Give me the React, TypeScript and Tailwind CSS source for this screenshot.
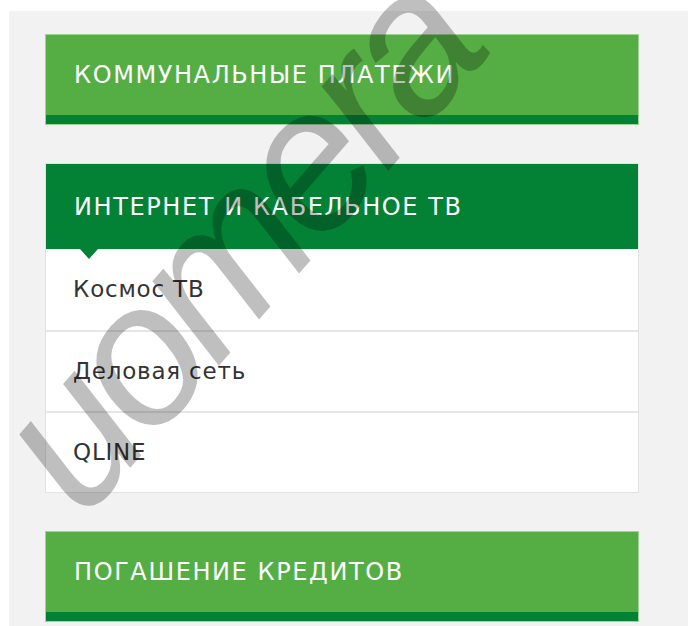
import React from "react";

const font = { fontFamily: '"DejaVu Sans", Verdana, sans-serif' };

function GreenCard({ title }: { title: string }) {
  return (
    <div className="border border-[#9fd294] bg-[#54ae44]">
      <div
        className="flex h-[80px] items-center px-[28px] text-[24px] tracking-[1.6px] text-white"
        style={font}
      >
        {title}
      </div>
      <div className="h-[9px] bg-[#038236]" />
    </div>
  );
}

const providers = ["Космос ТВ", "Деловая сеть", "QLINE"];

export default function App() {
  return (
    <div className="relative h-[626px] overflow-hidden bg-white pl-[9px] pt-[11px]">
      <div className="h-full bg-[#f2f2f2] pl-[36px] pt-[23px]">
        <div className="flex w-[594px] flex-col gap-[38px]">
          <GreenCard title="КОММУНАЛЬНЫЕ ПЛАТЕЖИ" />

          <div className="relative border border-[#e2e2e2] bg-white">
            <div
              className="relative flex h-[85px] items-center bg-[#038236] px-[28px] text-[24px] tracking-[1.6px] text-white"
              style={font}
            >
              ИНТЕРНЕТ И КАБЕЛЬНОЕ ТВ
              <span className="absolute left-[34px] top-full h-0 w-0 border-x-[9px] border-t-[10px] border-x-transparent border-t-[#038236]" />
            </div>
            {providers.map((name, i) => (
              <div
                key={name}
                className={`flex h-[81px] items-center px-[27px] text-[23px] tracking-[0.8px] text-[#333333] ${
                  i > 0 ? "border-t-2 border-[#e6e6e6]" : ""
                }`}
                style={font}
              >
                {name}
              </div>
            ))}
          </div>

          <GreenCard title="ПОГАШЕНИЕ КРЕДИТОВ" />
        </div>
      </div>

      {/* stock watermark laid across the page */}
      <span
        className="pointer-events-none absolute left-[84px] top-[352px] origin-[0_169px] -rotate-[49deg] whitespace-nowrap text-[200px] italic leading-none tracking-[-10px] text-black/25 select-none"
        style={{ fontFamily: '"Liberation Sans", Arial, sans-serif' }}
      >
        uomera
      </span>
    </div>
  );
}
